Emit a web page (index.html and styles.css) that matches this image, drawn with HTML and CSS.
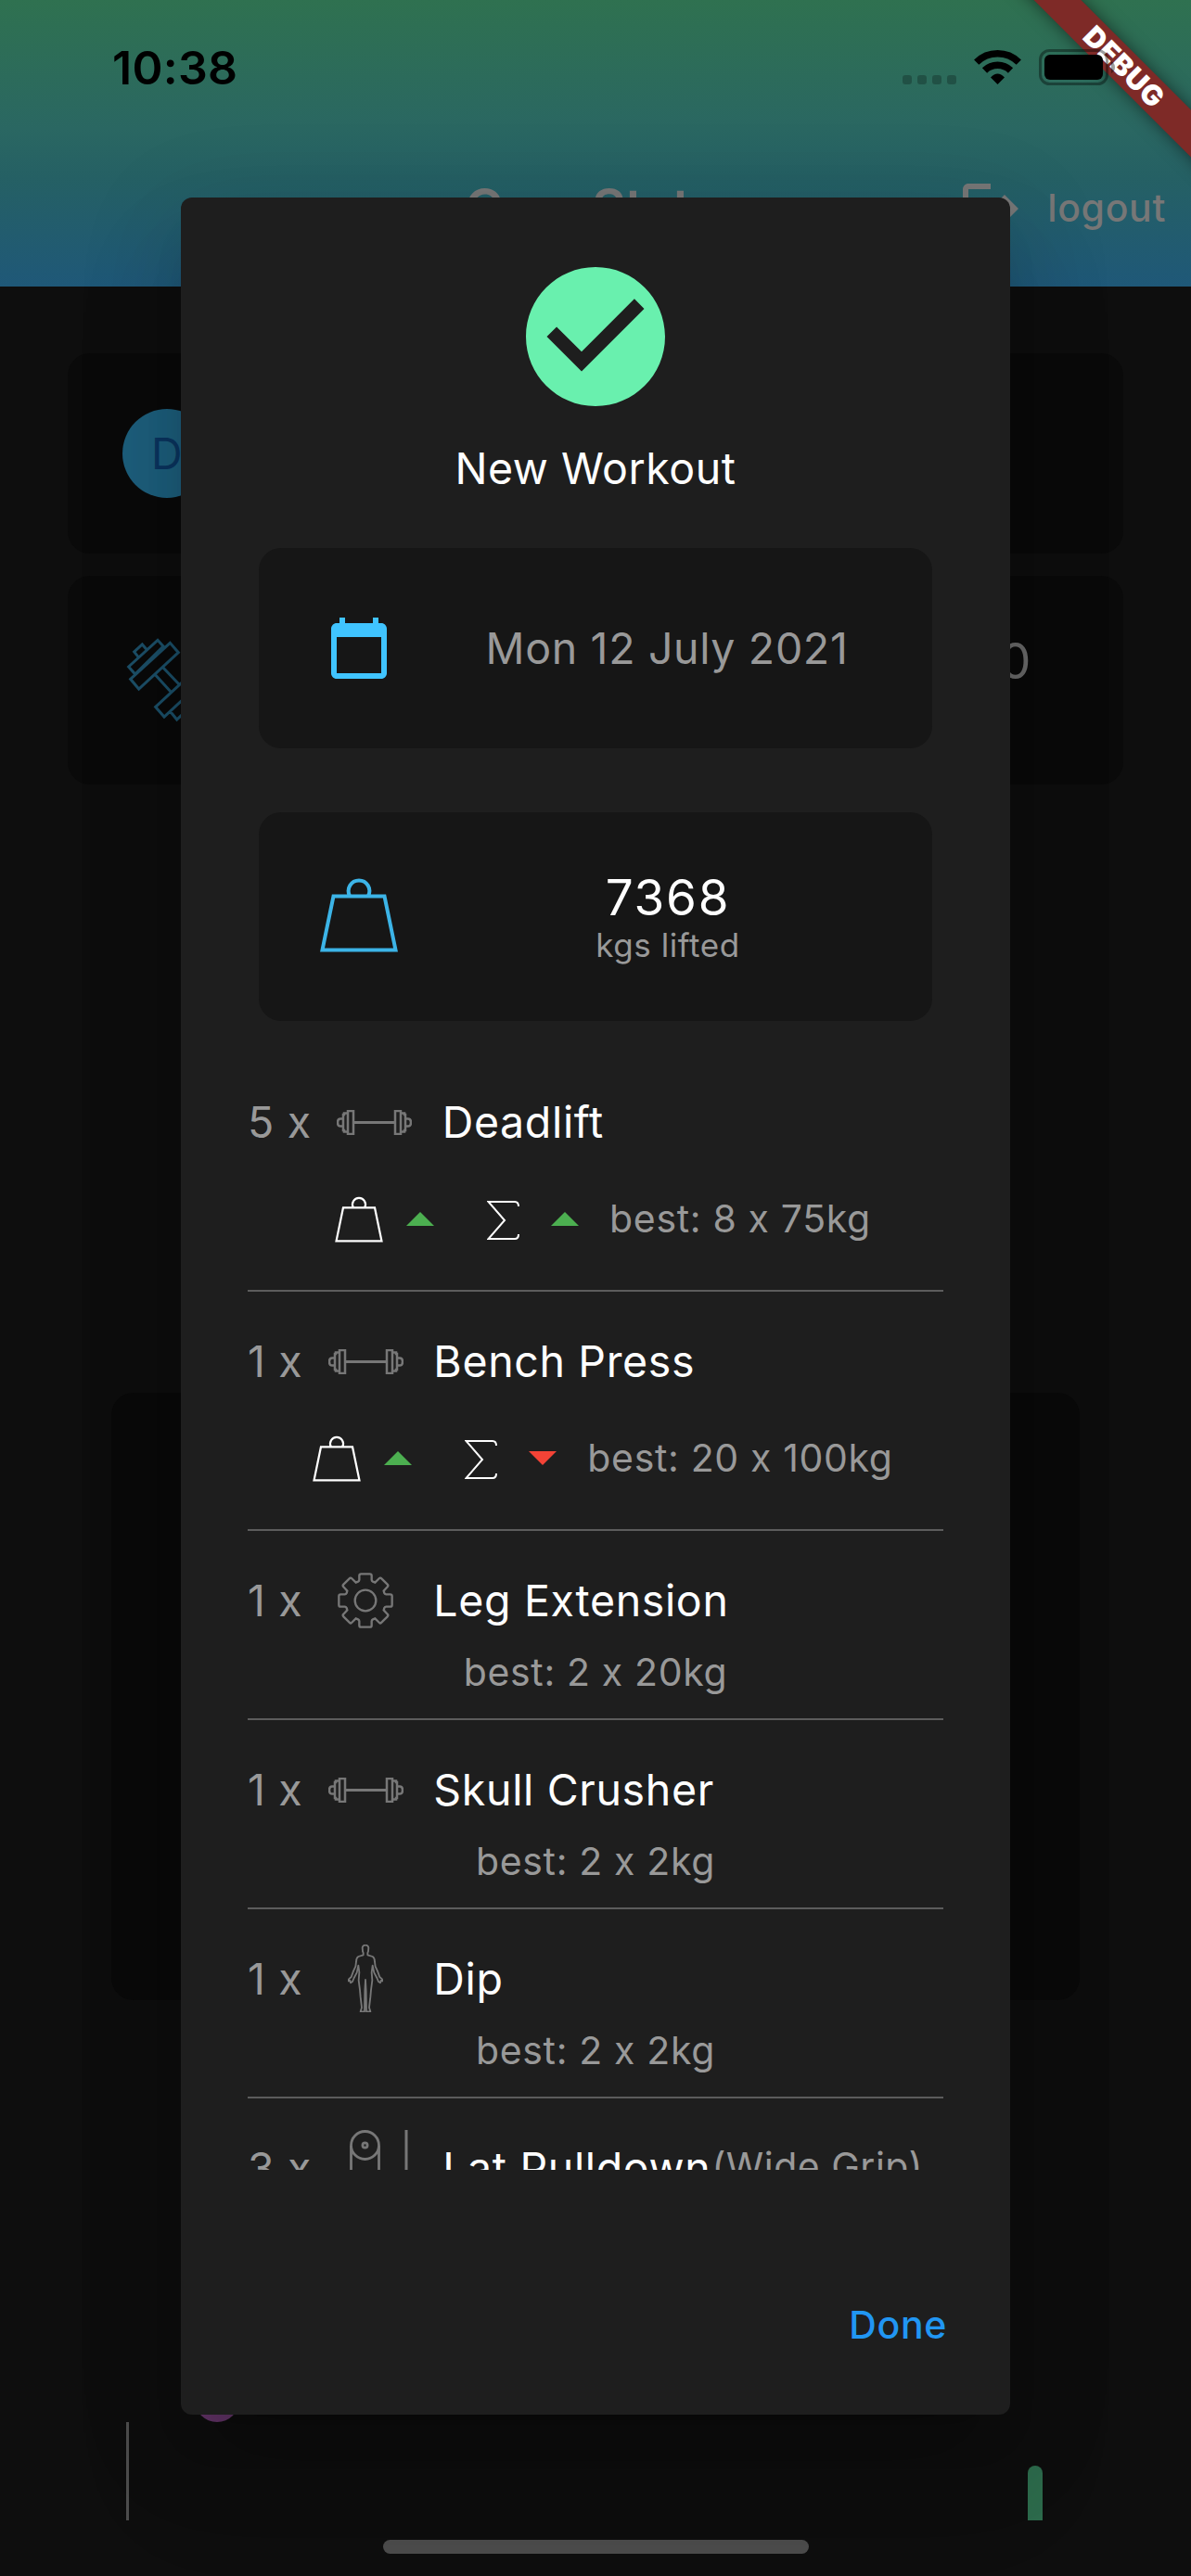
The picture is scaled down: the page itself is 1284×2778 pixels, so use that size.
FILE: index.html
```html
<!DOCTYPE html>
<html lang="en">
<head>
<meta charset="utf-8">
<title>Gym Stats</title>
<link rel="stylesheet" href="styles.css">
</head>
<body>
<svg width="0" height="0" class="defs">
  <symbol id="weight" viewBox="0 0 84 82">
    <path d="M14.5 21.500H69.500L81.500 79.500H2.500ZM32 21A11.300 11.300 0 1 1 52 21" fill="none" stroke="currentColor" stroke-width="var(--sw)"/>
  </symbol>
  <symbol id="barbell" viewBox="0 0 81 27">
    <g fill="none" stroke="currentColor" stroke-width="2.500">
      <path d="M12 1H18V26H12ZM12 3.500H8V5H7V22H8V23.500H12M7 9.500H4Q1 9.500 1 13.500T4 17.500H7M63 1H69V26H63ZM69 3.500H73V5H74V22H73V23.500H69M74 9.500H77Q80 9.500 80 13.500T77 17.500H74"/>
      <path d="M19 13.500H62" stroke-width="3"/>
    </g>
  </symbol>
  <symbol id="sigma" viewBox="0 0 35 42">
    <path d="M34 6Q34 1 30 1H1.500L19 21L1.500 41H30Q34 41 34 36" fill="none" stroke="currentColor" stroke-width="2"/>
  </symbol>
</svg>

<div class="screen">
  <header class="appbar">
    <div class="status">
      <span class="clock">10:38</span>
    </div>
    <div class="nav">
      <h1>Gym Stats</h1>
      <div class="logout">
        <svg width="72" height="72" viewBox="0 0 24 24"><path fill="currentColor" d="M17 7l-1.410 1.410L18.170 11H8v2h10.170l-2.580 2.580L17 17l5-5zM4 5h8V3H4c-1.100 0-2 .9-2 2v14c0 1.100.9 2 2 2h8v-2H4V5z"/></svg>
        <span>logout</span>
      </div>
    </div>
  </header>

  <main class="page">
    <section class="tile profile"><span class="avatar">D</span></section>
    <section class="tile total">
      <svg class="dumbbell" width="100" height="100" viewBox="0 0 300 300">
        <g fill="none" stroke="#1c5069" stroke-width="9">
          <path d="M42 61L29 45 55 21 68 36M11 93L105 7 123 27 32 117ZM17 133L145 16 172 47 44 165ZM122 95L177 153M98 120L150 177M98 223L226 105 254 137 126 255ZM145 237L167 264 258 178 240 158"/>
        </g>
      </svg>
      <span>0</span>
    </section>
    <section class="tile panel"></section>
    <section class="chart">
      <span class="axis"></span>
      <span class="dot"></span>
      <span class="bar"></span>
    </section>
  </main>
  <div class="home"></div>

  <div class="dialog">
    <svg class="check" width="150" height="150" viewBox="2 2 20 20"><path fill="#69f0ae" d="M12 2C6.480 2 2 6.480 2 12s4.480 10 10 10 10-4.480 10-10S17.520 2 12 2zm-2 15l-5-5 1.410-1.410L10 14.170l7.590-7.590L19 8l-9 9z"/></svg>
    <h2>New Workout</h2>

    <div class="card date">
      <svg width="72" height="72" viewBox="0 0 24 24"><path fill="#40c4ff" d="M20 3h-1V1h-2v2H7V1H5v2H4c-1.100 0-2 .9-2 2v16c0 1.100.9 2 2 2h16c1.100 0 2-.9 2-2V5c0-1.100-.9-2-2-2zm0 18H4V8h16v13z"/></svg>
      <div class="value">Mon 12 July 2021</div>
    </div>
    <div class="card lifted">
      <svg class="weight-lg" width="84" height="82"><use href="#weight"/></svg>
      <div class="value"><strong>7368</strong><small>kgs lifted</small></div>
    </div>

    <ul class="exercises">
      <li>
        <div class="head"><span class="count">5 x</span><span class="kind"><svg width="81" height="27"><use href="#barbell"/></svg></span><span class="name">Deadlift</span></div>
        <div class="detail metrics">
          <svg class="weight-sm" width="52" height="51"><use href="#weight"/></svg>
          <i class="tri up"></i>
          <svg class="sigma" width="35" height="42"><use href="#sigma"/></svg>
          <i class="tri up"></i>
          <span>best: 8 x 75kg</span>
        </div>
      </li>
      <li>
        <div class="head"><span class="count">1 x</span><span class="kind"><svg width="81" height="27"><use href="#barbell"/></svg></span><span class="name">Bench Press</span></div>
        <div class="detail metrics">
          <svg class="weight-sm" width="52" height="51"><use href="#weight"/></svg>
          <i class="tri up"></i>
          <svg class="sigma" width="35" height="42"><use href="#sigma"/></svg>
          <i class="tri down"></i>
          <span>best: 20 x 100kg</span>
        </div>
      </li>
      <li>
        <div class="head"><span class="count">1 x</span><span class="kind">
          <svg width="60" height="60" viewBox="0 0 180 180"><g fill="none" stroke="currentColor" stroke-width="7"><circle cx="90" cy="90" r="34"/><path d="M70 23V10Q70 4 76 4H104Q110 4 110 10V23Q110 27 114 29L121 32L135 18Q138 15 142 19L161 38Q165 42 161 46L149 59L151 66Q153 70 157 70H170Q176 70 176 76V104Q176 110 170 110H157Q153 110 151 114L149 121L161 134Q165 138 161 142L142 161Q138 165 135 162L121 148L114 151Q110 153 110 157V170Q110 176 104 176H76Q70 176 70 170V157Q70 153 66 151L59 148L45 162Q42 165 38 161L19 142Q15 138 19 134L31 121L29 114Q27 110 23 110H10Q4 110 4 104V76Q4 70 10 70H23Q27 70 29 66L31 59L19 46Q15 42 19 38L38 19Q42 15 45 18L59 32L66 29Q70 27 70 23Z"/></g></svg>
        </span><span class="name">Leg Extension</span></div>
        <div class="detail">best: 2 x 20kg</div>
      </li>
      <li>
        <div class="head"><span class="count">1 x</span><span class="kind"><svg width="81" height="27"><use href="#barbell"/></svg></span><span class="name">Skull Crusher</span></div>
        <div class="detail">best: 2 x 2kg</div>
      </li>
      <li>
        <div class="head"><span class="count">1 x</span><span class="kind">
          <svg class="figure" width="38" height="73" viewBox="0 0 114 219"><path fill="none" stroke="currentColor" stroke-width="5.500" stroke-linejoin="round" d="M57 2Q48 2 47 10L48 22L50 27V34L34 39Q27 43 27 56L25 71L18 86L11 105L3 112L2 118L7 117L9 124L15 120L20 108L29 91L34 68L37 90L35 116L39 147L41 170L45 204L41 217H54L55 150L57 114L59 150L60 217H73L69 204L73 170L75 147L79 116L77 90L80 68L85 91L94 108L99 120L105 124L107 117L112 118L111 112L103 105L96 86L89 71L87 56Q87 43 80 39L64 34V27L66 22L67 10Q66 2 57 2Z"/></svg>
        </span><span class="name">Dip</span></div>
        <div class="detail">best: 2 x 2kg</div>
      </li>
      <li>
        <div class="head"><span class="count">3 x</span><span class="kind">
          <svg class="pulley" width="64" height="82" viewBox="0 0 64 82"><g fill="none" stroke="currentColor" stroke-width="2.800"><circle cx="16.500" cy="16.500" r="15"/><circle cx="16.500" cy="16.500" r="2.600"/><path d="M1.500 17V82M31.500 17V82"/><path d="M61 0V82" stroke-width="3"/></g></svg>
        </span><span class="name">Lat Pulldown</span><span class="variant">(Wide Grip)</span></div>
        <div class="detail">best: 10 x 50kg</div>
      </li>
    </ul>

    <div class="actions"><span>Done</span></div>
  </div>

  <div class="ribbon">DEBUG</div>
  <div class="indicators">
    <svg width="242" height="40" viewBox="0 0 242 40">
      <g fill="#000" fill-opacity=".24"><rect x="3" y="28" width="10" height="10" rx="3"/><rect x="19" y="28" width="10" height="10" rx="3"/><rect x="35" y="28" width="10" height="10" rx="3"/><rect x="51" y="28" width="10" height="10" rx="3"/></g>
      <g fill="none" stroke="#000" stroke-width="7.500"><path d="M82.700 14.200A32.500 32.500 0 0 1 128.300 14.200"/><path d="M91.500 23A20 20 0 0 1 119.500 23"/></g>
      <path d="M98 30.500Q105.500 22.500 113 30.500L105.500 38Z"/>
      <rect x="151.500" y="1.500" width="72" height="36" rx="10" fill="none" stroke="#000" stroke-opacity=".38" stroke-width="3"/>
      <rect x="156" y="6" width="63" height="27" rx="6"/>
      <path d="M228 13Q232 15 232 19.500T228 26Z" fill-opacity=".38"/>
    </svg>
  </div>
</div>
</body>
</html>
```
FILE: styles.css
```css
* { box-sizing: border-box; margin: 0; padding: 0; }

body {
  background: #0e0e0e;
  font-family: "Inter", "Liberation Sans", sans-serif;
  letter-spacing: .65px;
}

svg { display: block; flex: none; }
.defs { position: absolute; }

.screen {
  position: relative;
  width: 1284px;
  height: 2778px;
  overflow: hidden;
  background: #0e0e0e;
}

/* App bar */
.appbar {
  height: 309px;
  background: linear-gradient(#2f7150, #2a6762 45%, #256064 62%, #1f5878);
}
.status { height: 144px; padding: 43px 0 0 121px; }
.clock {
  display: block;
  font-size: 50px;
  font-weight: 600;
  line-height: 60px;
  letter-spacing: .3px;
}
.nav {
  display: grid;
  grid-template-columns: 1fr auto 1fr;
  align-items: center;
  height: 162px;
  padding-right: 27px;
  color: #777;
}
.nav h1 {
  grid-column: 2;
  margin: -3px -9px 0 9px;
  font-size: 56px;
  font-weight: 600;
  line-height: 66px;
  letter-spacing: -.6px;
}
.logout {
  display: flex;
  align-items: center;
  justify-content: flex-end;
  gap: 25px;
  font-size: 41px;
  font-weight: 500;
  line-height: 50px;
}
.logout span { margin: -2px 0 0; }

/* Page behind the dialog */
.page { padding-top: 72px; }
.tile { margin: 0 73px; border-radius: 24px; background: #0a0a0a; }
.profile { display: flex; align-items: center; height: 216px; padding-left: 59px; }
.avatar {
  display: flex;
  width: 96px;
  height: 96px;
  align-items: center;
  justify-content: center;
  border-radius: 50%;
  background: #1d5f7d;
  color: #0b3560;
  font-size: 46.5px;
}
.total {
  display: flex;
  align-items: flex-start;
  justify-content: space-between;
  height: 225px;
  margin-top: 24px;
  padding: 67px 99px 0 62px;
  color: #6b6b6b;
  font-size: 53px;
  line-height: 50px;
}
.panel { height: 655px; margin: 656px 120px 0; }
.chart {
  display: flex;
  align-items: flex-end;
  height: 216px;
  margin-top: 345px;
  padding: 0 160px 0 136px;
}
.axis { width: 3px; height: 106px; background: #4d4d4d; }
.dot {
  width: 48px;
  height: 48px;
  margin: 0 auto 106px 71px;
  border-radius: 50%;
  background: #6a386f;
}
.bar { width: 16px; height: 59px; border-radius: 8px 8px 0 0; background: #2d6b4c; }
.home { width: 459px; height: 15px; margin: 21px auto 0; border-radius: 8px; background: #4b4b4b; }

/* Dialog */
.dialog {
  position: absolute;
  top: 213px;
  left: 195px;
  display: flex;
  flex-direction: column;
  width: 894px;
  height: 2391px;
  padding: 75px 72px 0;
  border-radius: 12px;
  background: #1e1e1e;
  box-shadow: 0 33px 45px -21px rgba(0, 0, 0, .18), 0 72px 114px 9px rgba(0, 0, 0, .11), 0 27px 110px 12px rgba(0, 0, 0, .1);
  color: #fff;
}
.check { align-self: center; }
.dialog h2 {
  margin-top: 39px;
  font-size: 46.5px;
  font-weight: 400;
  line-height: 56px;
  letter-spacing: .55px;
  text-align: center;
}
.card {
  display: flex;
  align-items: center;
  margin: 0 12px;
  border-radius: 24px;
  background: #161616;
}
.date { height: 216px; margin-top: 58px; padding-left: 72px; }
.lifted { height: 225px; margin-top: 69px; padding-left: 66px; }
.value {
  display: flex;
  width: 400px;
  flex-direction: column;
  align-items: center;
  margin-left: 96px;
  color: #999;
  font-size: 46.5px;
  line-height: 56px;
  white-space: nowrap;
}
.lifted .value { margin-left: 91px; }
.value strong { color: #fff; font-size: 53px; font-weight: 400; line-height: 60px; letter-spacing: 1.8px; }
.value small { font-size: 35px; line-height: 42px; letter-spacing: .55px; }
.weight-lg { --sw: 4; margin-top: -6px; color: #3cb4e7; }

/* Exercise list */
.exercises { height: 1205px; margin-top: 34px; overflow: hidden; list-style: none; }
.exercises li { padding: 30px 0 16px; border-bottom: 2px solid #5c5c5c; }
.head {
  display: flex;
  align-items: center;
  height: 90px;
  font-size: 46.5px;
  line-height: 56px;
  white-space: nowrap;
}
.count { padding-right: 23px; color: #999; }
.kind {
  display: flex;
  width: 90px;
  height: 90px;
  align-items: center;
  justify-content: center;
  margin-right: 28px;
  color: #777;
}
.figure { margin-top: -2px; }
.pulley { margin-left: 9px; }
.variant { margin: -5px 0 0 1px; color: #999; font-size: 41px; letter-spacing: .5px; }
.detail {
  display: flex;
  height: 66px;
  align-items: center;
  justify-content: center;
  padding-bottom: 2px;
  color: #999;
  font-size: 41px;
  line-height: 48px;
  white-space: nowrap;
}
.metrics { height: 120px; padding: 0 0 2px 16px; }
.weight-sm { --sw: 3.600; margin-right: 25px; color: #fff; }
.sigma { margin: 3px 34px 0 57px; color: #fff; }
.tri { margin-top: 1px; border: solid transparent; border-width: 0 15px; }
.up { border-bottom: 15px solid #4caf50; }
.down { border-top: 15px solid #f44336; }
.tri + span { margin-left: 33px; }

.actions {
  display: flex;
  justify-content: flex-end;
  margin-top: 142px;
  color: #2196f3;
  font-size: 41px;
  font-weight: 500;
  line-height: 50px;
}
.actions span { margin-right: -4px; }

/* Overlays */
.ribbon {
  position: absolute;
  top: 54px;
  left: 1062px;
  width: 300px;
  height: 36px;
  transform: rotate(45deg);
  background: #7e2a27;
  box-shadow: 0 0 18px rgba(0, 0, 0, .5);
  color: #fff;
  font-size: 30.5px;
  font-weight: 900;
  line-height: 36px;
  letter-spacing: .6px;
  text-align: center;
}
.indicators { position: absolute; top: 53px; left: 970px; }
```
